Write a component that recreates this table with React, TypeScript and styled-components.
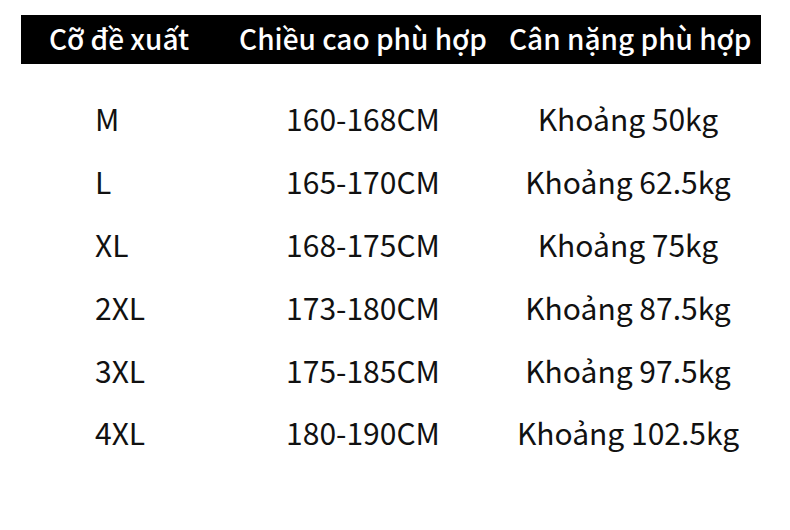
import React from 'react'
import styled, { createGlobalStyle } from 'styled-components'

const GlobalStyle = createGlobalStyle`
	html, body {
		margin: 0;
		padding: 0;
		background: #ffffff;
	}
	body {
		font-family: "Noto Sans CJK SC", "Noto Sans", sans-serif;
		color: #111111;
	}
`

interface ISizeRow {
	size: string
	height: string
	weight: string
}

const rows: ISizeRow[] = [
	{ size: 'M', height: '160-168CM', weight: 'Khoảng 50kg' },
	{ size: 'L', height: '165-170CM', weight: 'Khoảng 62.5kg' },
	{ size: 'XL', height: '168-175CM', weight: 'Khoảng 75kg' },
	{ size: '2XL', height: '173-180CM', weight: 'Khoảng 87.5kg' },
	{ size: '3XL', height: '175-185CM', weight: 'Khoảng 97.5kg' },
	{ size: '4XL', height: '180-190CM', weight: 'Khoảng 102.5kg' }
]

function App () {
	return (
		<>
			<GlobalStyle />
			<Page>
				<HeaderBar>
					<HeaderCell>Cỡ đề xuất</HeaderCell>
					<HeaderCell>Chiều cao phù hợp</HeaderCell>
					<HeaderCell>Cân nặng phù hợp</HeaderCell>
				</HeaderBar>
				<Body>
					{rows.map((row: ISizeRow) => (
						<Row key={row.size}>
							<SizeCell>{row.size}</SizeCell>
							<Cell>{row.height}</Cell>
							<Cell>{row.weight}</Cell>
						</Row>
					))}
				</Body>
			</Page>
		</>
	)
}

const Page = styled.div`
	width: 790px;
	height: 530px;
	padding: 15px 0 0 21px;
	box-sizing: border-box;
	overflow: hidden;
`
const columns = `196px 292px 238px`

const HeaderBar = styled.div`
	width: 740px;
	height: 49px;
	background: #000000;
	display: grid;
	grid-template-columns: ${columns};
	align-items: center;
`
const HeaderCell = styled.div`
	color: #ffffff;
	font-size: 28px;
	font-weight: 500;
	text-align: center;
	white-space: nowrap;
	line-height: 1;
	padding-bottom: 3px;
`
const Body = styled.div`
	display: flex;
	flex-direction: column;
	padding-top: 23px;
`
const Row = styled.div`
	display: grid;
	grid-template-columns: ${columns};
	align-items: center;
	height: 62.8px;
`
const Cell = styled.div`
	font-size: 30px;
	text-align: center;
	white-space: nowrap;
	line-height: 1;
	color: #111111;
`
const SizeCell = styled(Cell)`
	text-align: left;
	padding-left: 74px;
`

export default App
